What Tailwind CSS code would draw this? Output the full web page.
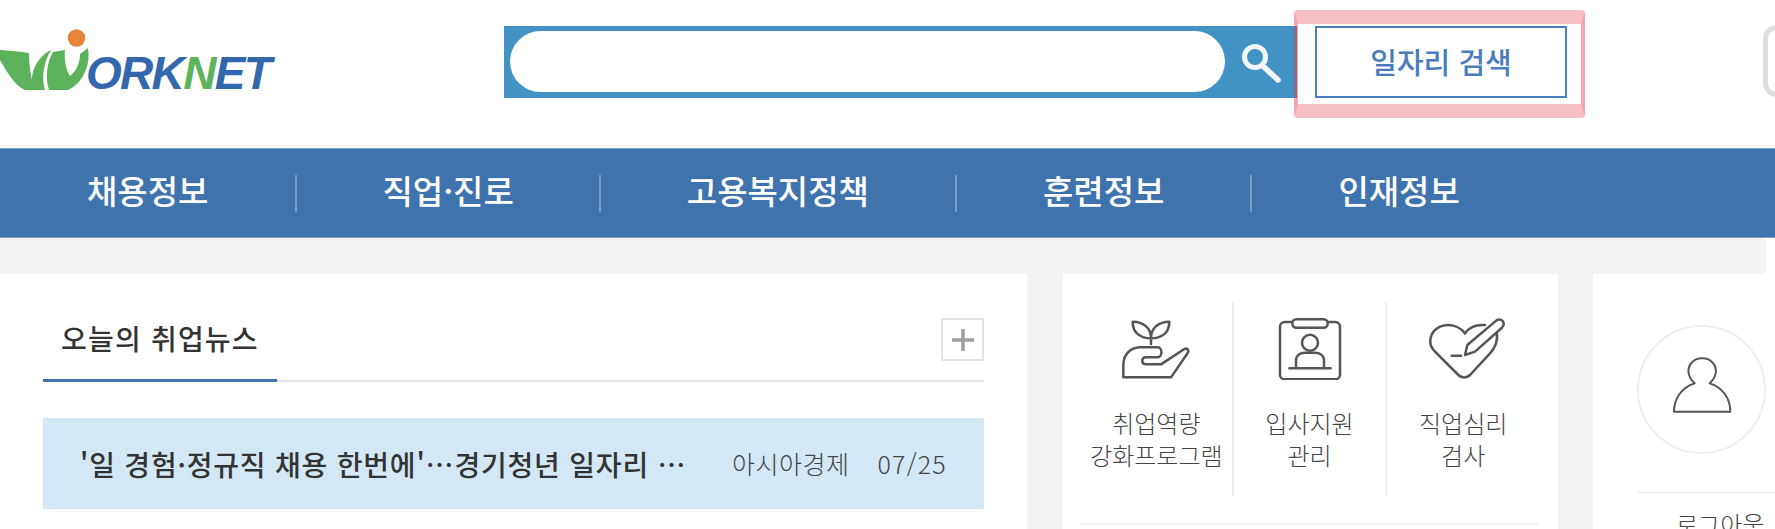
<!DOCTYPE html>
<html lang="ko">
<head>
  <meta charset="UTF-8" />
  <title>WORKNET</title>
  <script src="https://cdn.jsdelivr.net/npm/@tailwindcss/browser@4"></script>
</head>
<body class="bg-white h-[529px] overflow-hidden font-['Noto_Sans_CJK_KR',sans-serif]">

  <!-- header -->
  <header class="relative flex h-[148px] w-full">
    <a class="flex w-[504px] h-[148px] relative shrink-0" href="#">
      <svg class="w-[92px] h-[70px] mt-[28px] shrink-0" viewBox="0 28 92 70">
        <circle cx="76.5" cy="38" r="8.7" fill="#e8833a"/>
        <path fill="#5cb25a" d="M0 50C10 50.500 20 51.500 29 53C29 66 31 79 35 90L25 90C15 86 7 72 0 60Z"/>
        <path fill="#5cb25a" d="M33 90C29 76 35 58 51 50C44 62 41 76 45 90Z"/>
        <path fill="#5cb25a" d="M49 90C45 78 47 62 53 52L65 50C64 60 66 70 70 76C78 70 80 60 80 54L88 48C91 66 82 84 68 90Z"/>
      </svg>
      <span class="text-[46px] leading-[46px] mt-[50px] -ml-[6px] font-bold italic tracking-[-1.700px] text-[#3468ae] font-['Liberation_Sans',sans-serif]">ORK<span class="text-[#5cb25a]">N</span>ET</span>
    </a>

    <div class="flex w-[793px] h-[72px] mt-[26px] bg-[#4293c4] shrink-0">
      <input type="text" class="w-[715px] h-[61px] ml-[6px] mt-[5px] rounded-full bg-white" />
      <svg class="w-[42px] h-[42px] ml-[15px] mt-[16px]" viewBox="0 0 42 42" fill="none" stroke="#f2f7fb">
        <circle cx="15" cy="15" r="10.500" stroke-width="5"/>
        <path d="M24 25L38 38" stroke-width="5.500" stroke-linecap="round"/>
      </svg>
    </div>

    <button class="w-[252px] h-[72px] ml-[18px] mt-[26px] border-2 border-[#4a7fc1] text-[#4a7cbd] text-[29px] font-medium shrink-0">일자리 검색</button>

    <div class="w-[40px] h-[72px] ml-[196px] mt-[25px] border-[5px] border-[#dedede] rounded-[14px] shrink-0"></div>

    <!-- highlight over the search button -->
    <div class="absolute left-[1294px] top-[10px] w-[291px] h-[108px] rounded-[4px] border-x-[4px] border-x-[#e63c50]/45 border-y-[14px] border-y-[#e63c50]/33"></div>
  </header>

  <!-- nav -->
  <nav class="flex items-center h-[90px] bg-[#3f73ae] border-y border-[#7fa3cc] text-white text-[33px] font-medium">
    <a class="px-[87px] h-[37px] pb-[4px] flex items-center border-r-2 border-white/30" href="#">채용정보</a>
    <a class="px-[85px] h-[37px] pb-[4px] flex items-center border-r-2 border-white/30" href="#">직업·진로</a>
    <a class="px-[86px] h-[37px] pb-[4px] flex items-center border-r-2 border-white/30" href="#">고용복지정책</a>
    <a class="px-[86px] h-[37px] pb-[4px] flex items-center border-r-2 border-white/30" href="#">훈련정보</a>
    <a class="px-[86px] h-[37px] pb-[4px] flex items-center" href="#">인재정보</a>
  </nav>

  <div class="h-[36px] w-[1766px] bg-[#f1f3f5]"></div>

  <main class="flex h-[255px] bg-[#f1f3f5] overflow-hidden">
    <!-- news -->
    <section class="w-[1027px] h-full bg-white px-[43px] pt-[44px] shrink-0">
      <div class="flex justify-between items-start h-[64px] border-b-2 border-[#e6e6e6]">
        <h2 class="w-[234px] h-[64px] pl-[18px] border-b-[3px] border-[#3f73ae] text-[28px] tracking-[1.200px] leading-[40px] font-medium text-[#333]">오늘의 취업뉴스</h2>
        <button class="flex items-center justify-center w-[43px] h-[43px] border-2 border-[#e3e3e3]">
          <svg class="w-[22px] h-[22px]" viewBox="0 0 22 22" stroke="#a0a0a0" stroke-width="3.500"><path d="M0 11H22M11 0V22"/></svg>
        </button>
      </div>
      <div class="flex items-center h-[91px] mt-[36px] pl-[37px] bg-[#d4e7f5] text-[#333]">
        <span class="w-[652px] text-[28px] tracking-[0.800px] font-medium whitespace-nowrap">'일 경험·정규직 채용 한번에'…경기청년 일자리 …</span>
        <span class="text-[25px] tracking-[0.500px] font-light text-[#444] whitespace-nowrap">아시아경제</span>
        <span class="ml-[28px] text-[25px] tracking-[1.200px] font-light text-[#444]">07/25</span>
      </div>
    </section>

    <!-- shortcuts -->
    <section class="w-[495px] h-full ml-[36px] bg-white pl-[18px] pr-[19px] pt-[28px] shrink-0">
      <div class="flex">
        <a class="flex flex-col items-center w-[153px] h-[194px] pt-[15px] border-r-2 border-[#eeeeee]" href="#">
          <svg class="w-[70px] h-[63px]" viewBox="190 141 210 189" fill="none" stroke="#555" stroke-width="7.500" stroke-linejoin="round" stroke-linecap="round">
            <path d="M280 205C250 205 225 190 225 155C255 155 280 172 280 205C280 172 305 155 335 155C335 190 310 205 280 205V222"/>
            <path d="M197 322V285C197 255 215 235 245 232H300C315 232 315 262 300 262H265C250 262 250 283 265 283H310L380 237C392 232 395 245 388 252L340 322Z"/>
          </svg>
          <span class="mt-[27px] text-[24px] leading-[32px] font-light text-[#444] text-center">취업역량<br>강화프로그램</span>
        </a>
        <a class="flex flex-col items-center w-[154px] h-[194px] pt-[15px] border-r-2 border-[#eeeeee]" href="#">
          <svg class="w-[70px] h-[63px]" viewBox="645 141 210 189" fill="none" stroke="#555" stroke-width="7.500" stroke-linejoin="round" stroke-linecap="round">
            <rect x="660" y="156" width="180" height="172" rx="14"/>
            <rect x="697" y="148" width="106" height="25" rx="12" fill="#fff"/>
            <circle cx="750" cy="218" r="24"/>
            <path d="M708 295V272C708 256 720 248 735 248H765C780 248 792 256 792 272V295M688 295H812"/>
          </svg>
          <span class="mt-[27px] text-[24px] leading-[32px] font-light text-[#444] text-center">입사지원<br>관리</span>
        </a>
        <a class="flex flex-col items-center w-[152px] h-[194px] pt-[15px]" href="#">
          <svg class="w-[84px] h-[63px]" viewBox="1084 141 250 189" fill="none" stroke="#555" stroke-width="7.500" stroke-linejoin="round" stroke-linecap="round">
            <path d="M1215 190C1195 165 1165 160 1140 170C1110 185 1100 220 1125 245L1195 315C1205 325 1220 325 1230 315L1290 250C1305 235 1315 210 1310 190"/>
            <path d="M1215 190C1225 175 1245 163 1275 165"/>
            <path d="M1305 155C1312 147 1322 147 1328 153C1333 160 1332 167 1325 174L1245 245L1215 255L1222 225Z"/>
            <path d="M1175 257H1203"/>
          </svg>
          <span class="mt-[27px] text-[24px] leading-[32px] font-light text-[#444] text-center">직업심리<br>검사</span>
        </a>
      </div>
      <div class="mt-[27px] h-[2px] bg-[#f1f3f5]"></div>
    </section>

    <!-- my page -->
    <section class="flex-1 h-full ml-[35px] bg-white pl-[44px] pt-[51px] overflow-hidden">
      <div class="flex items-center justify-center w-[129px] h-[129px] rounded-full border-2 border-[#eeeeee]">
        <svg class="w-[66px] h-[66px]" viewBox="388 259 198 198" fill="none" stroke="#555" stroke-width="6" stroke-linejoin="round">
          <path d="M403 423C403 385 425 350 465 338C445 320 440 295 455 277C470 258 505 258 520 277C535 295 530 320 510 338C550 350 572 385 572 423Z"/>
        </svg>
      </div>
      <div class="mt-[38px] border-t border-[#e8e8e8] pt-[14px] pl-[39px] text-[24px] leading-[33px] font-light text-[#444] whitespace-nowrap">로그아웃</div>
    </section>
  </main>

</body>
</html>
